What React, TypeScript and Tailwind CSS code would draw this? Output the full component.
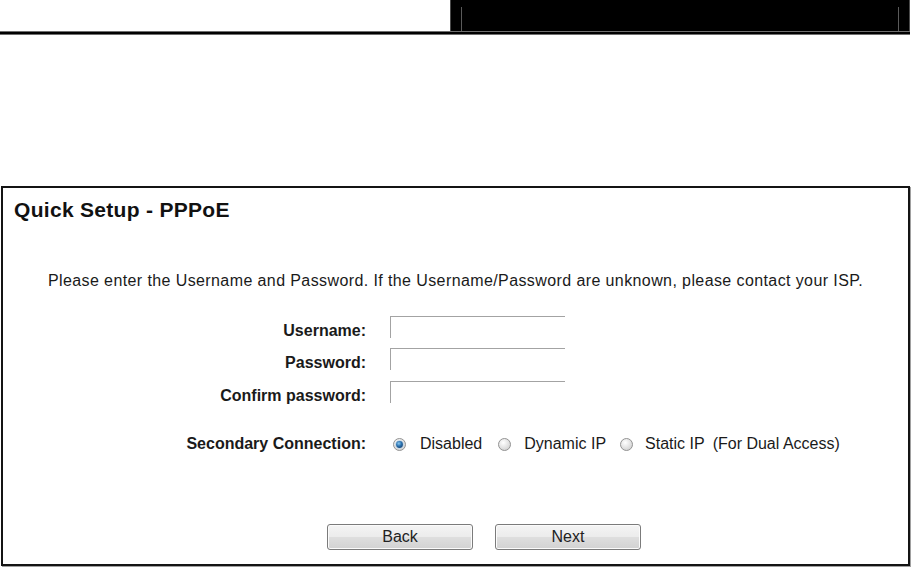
import React from "react";

function Radio({ checked }: { checked?: boolean }) {
  return (
    <svg width="13" height="13" viewBox="0 0 13 13" className="shrink-0">
      <defs>
        <radialGradient id={checked ? "rg1" : "rg0"} cx="40%" cy="35%" r="70%">
          <stop offset="0%" stopColor="#ffffff" />
          <stop offset="100%" stopColor="#d0d0d0" />
        </radialGradient>
        <radialGradient id="dot" cx="40%" cy="35%" r="70%">
          <stop offset="0%" stopColor="#8cc8f0" />
          <stop offset="55%" stopColor="#2a72b0" />
          <stop offset="100%" stopColor="#1a4575" />
        </radialGradient>
      </defs>
      <circle cx="6.5" cy="6.5" r="6" fill={`url(#${checked ? "rg1" : "rg0"})`} stroke="#939393" strokeWidth="1" />
      {checked && (
        <>
          <circle cx="6.5" cy="6.5" r="4.3" fill="#bcd3e6" />
          <circle cx="6.5" cy="6.5" r="3.4" fill="url(#dot)" />
        </>
      )}
    </svg>
  );
}

function Field({ label }: { label: string }) {
  return (
    <div className="flex items-start h-[22px]">
      <div className="w-[363px] text-right font-bold text-[16px] leading-[18px] pt-[6px]">{label}</div>
      <div className="ml-[24px] w-[175px] h-[22px] border-t border-l border-[#a3a3a3] bg-white" />
    </div>
  );
}

function Btn({ children }: { children: React.ReactNode }) {
  return (
    <div className="w-[146px] h-[26px] rounded-[3px] border border-[#7b7b7b] bg-[linear-gradient(#f4f4f4_0%,#ececec_48%,#dedede_52%,#d2d2d2_100%)] flex items-center justify-center text-[16px] text-[#222] shadow-[inset_0_0_0_1px_#fbfbfb]">
      {children}
    </div>
  );
}

export default function App() {
  return (
    <div className="w-[919px] h-[576px] bg-white overflow-hidden font-['Liberation_Sans',Arial,sans-serif] text-[#1a1a1a]">
      <div className="flex w-[910px]">
        <div className="w-[450px]" />
        <div className="w-[460px] h-[31px] bg-black border-x border-[#4a4a4a] flex justify-between pl-[10px] pr-[10px]">
          <div className="mt-[7px] h-[24px] w-px bg-[#5a5a5a]" />
          <div className="mt-[7px] h-[24px] w-px bg-[#5a5a5a]" />
        </div>
      </div>
      <div className="w-[910px] h-[4px] bg-black border-y border-[#6e6e6e]" />

      <div className="mt-[151px] ml-[1px] w-[909px] h-[380px] border-2 border-[#141414] shadow-[1px_1px_0_#a0a0a0] flex flex-col">
        <div className="pt-[10px] pl-[11px] font-bold text-[21px] leading-[24px] tracking-[0.3px] text-[#111]">Quick Setup - PPPoE</div>
        <div className="mt-[50px] text-center text-[16px] leading-[18px] tracking-[0.4px]">
          Please enter the Username and Password. If the Username/Password are unknown, please contact your ISP.
        </div>
        <div className="mt-[26px]">
          <Field label="Username:" />
        </div>
        <div className="mt-[10px]">
          <Field label="Password:" />
        </div>
        <div className="mt-[11px]">
          <Field label="Confirm password:" />
        </div>
        <div className="mt-[32px] flex items-center h-[18px] text-[16px] leading-[18px]">
          <div className="w-[363px] text-right font-bold">Secondary Connection:</div>
          <div className="ml-[27px]"><Radio checked /></div>
          <span className="ml-[14px]">Disabled</span>
          <div className="ml-[16px]"><Radio /></div>
          <span className="ml-[13px]">Dynamic IP</span>
          <div className="ml-[14px]"><Radio /></div>
          <span className="ml-[12px]">Static IP</span>
          <span className="ml-[8px]">(For Dual Access)</span>
        </div>
        <div className="mt-[71px] flex ml-[324px] gap-[22px]">
          <Btn>Back</Btn>
          <Btn>Next</Btn>
        </div>
      </div>
    </div>
  );
}
